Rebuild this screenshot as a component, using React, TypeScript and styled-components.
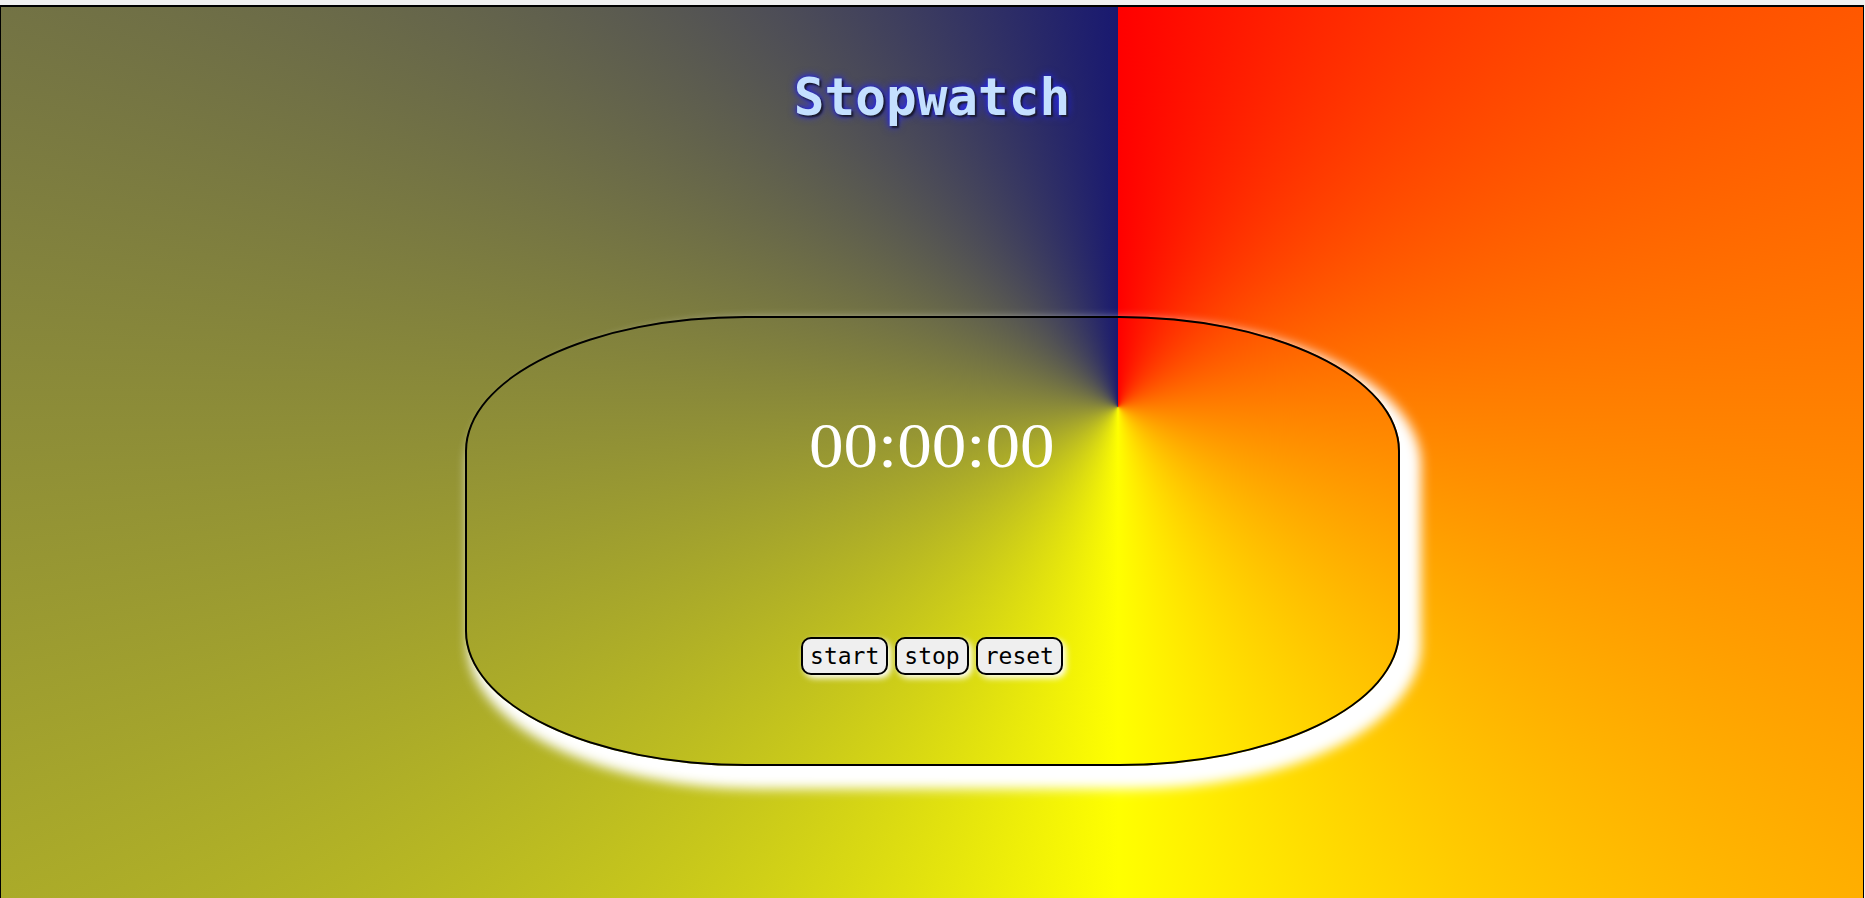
import React from 'react';
import styled, { createGlobalStyle } from "styled-components";

const GlobalStyle = createGlobalStyle`
    html, body {
        margin: 0;
        overflow: hidden;
    }
    body {
        background-color: #f0f0f0;
        padding-top: 5px;
    }
`

const Page = styled.div`
    min-height: 100vh;
    margin-right: 1px;
    border: 1px solid black;
    border-top-width: 2px;
    background: conic-gradient(at 1117px 400px, red, yellow, midnightblue);
    display: flex;
    flex-direction: column;
    align-items: center;
`

const Title = styled.h1`
    margin: 61px 0 0;
    font-family: "DejaVu Sans Mono", monospace;
    font-size: 51px;
    font-weight: bold;
    color: #c4e0ff;
    text-shadow: 2px 2px 2px #1a1a2a, 0 0 10px #2a2aff, 0 0 4px #2020c0;
`

const Card = styled.div`
    box-sizing: border-box;
    width: 935px;
    height: 450px;
    margin-top: 189px;
    padding-top: 91px;
    border: 2px solid black;
    border-radius: 30%;
    box-shadow: 12px 14px 12px 9px #fff;
    display: flex;
    flex-direction: column;
    align-items: center;
`

const Time = styled.div`
    font-family: "Liberation Serif", serif;
    font-size: 64px;
    color: white;
    transform: scaleX(1.08);
`

const Buttons = styled.div`
    display: flex;
    gap: 7px;
    margin-top: 154px;
`

const Button = styled.button`
    font-family: "DejaVu Sans Mono", monospace;
    font-size: 23px;
    color: black;
    background-color: #efefef;
    border: 2px solid black;
    border-radius: 10px;
    padding: 2px 7px;
    line-height: 30px;
    box-shadow: 3px 3px 6px #fff;
    cursor: pointer;
`

export default function App() {
    return (
        <>
            <GlobalStyle />
            <Page>
                <Title>Stopwatch</Title>
                <Card>
                    <Time>00:00:00</Time>
                    <Buttons>
                        <Button>start</Button>
                        <Button>stop</Button>
                        <Button>reset</Button>
                    </Buttons>
                </Card>
            </Page>
        </>
    );
}
